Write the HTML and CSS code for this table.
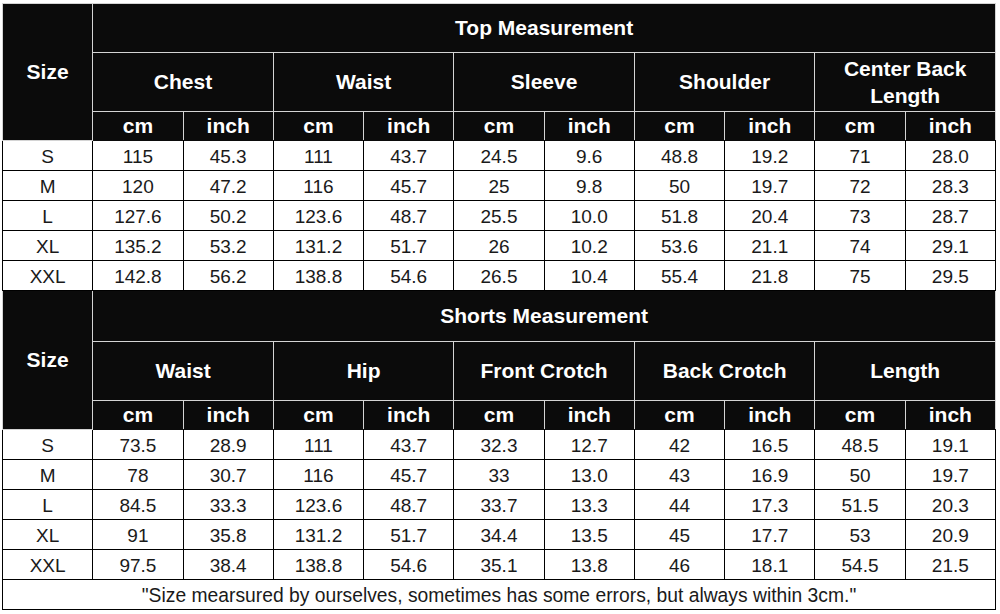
FILE: index.html
```html
<!DOCTYPE html>
<html>
<head>
<meta charset="utf-8">
<link rel="stylesheet" href="styles.css">
</head>
<body>
<table class="chart">
  <colgroup>
    <col><col><col><col><col><col><col><col><col><col><col>
  </colgroup>
  <tr class="r-title">
    <th class="h size" rowspan="3">Size</th>
    <th class="h" colspan="10">Top Measurement</th>
  </tr>
  <tr class="r-group">
    <th class="h" colspan="2">Chest</th>
    <th class="h" colspan="2">Waist</th>
    <th class="h" colspan="2">Sleeve</th>
    <th class="h" colspan="2">Shoulder</th>
    <th class="h two" colspan="2">Center Back<br>Length</th>
  </tr>
  <tr class="r-unit">
    <th class="h">cm</th><th class="h">inch</th>
    <th class="h">cm</th><th class="h">inch</th>
    <th class="h">cm</th><th class="h">inch</th>
    <th class="h">cm</th><th class="h">inch</th>
    <th class="h">cm</th><th class="h">inch</th>
  </tr>
  <tr class="r-data"><td>S</td><td>115</td><td>45.3</td><td>111</td><td>43.7</td><td>24.5</td><td>9.6</td><td>48.8</td><td>19.2</td><td>71</td><td>28.0</td></tr>
  <tr class="r-data"><td>M</td><td>120</td><td>47.2</td><td>116</td><td>45.7</td><td>25</td><td>9.8</td><td>50</td><td>19.7</td><td>72</td><td>28.3</td></tr>
  <tr class="r-data"><td>L</td><td>127.6</td><td>50.2</td><td>123.6</td><td>48.7</td><td>25.5</td><td>10.0</td><td>51.8</td><td>20.4</td><td>73</td><td>28.7</td></tr>
  <tr class="r-data"><td>XL</td><td>135.2</td><td>53.2</td><td>131.2</td><td>51.7</td><td>26</td><td>10.2</td><td>53.6</td><td>21.1</td><td>74</td><td>29.1</td></tr>
  <tr class="r-data"><td>XXL</td><td>142.8</td><td>56.2</td><td>138.8</td><td>54.6</td><td>26.5</td><td>10.4</td><td>55.4</td><td>21.8</td><td>75</td><td>29.5</td></tr>

  <tr class="r-title2">
    <th class="h size" rowspan="3">Size</th>
    <th class="h" colspan="10">Shorts Measurement</th>
  </tr>
  <tr class="r-group">
    <th class="h" colspan="2">Waist</th>
    <th class="h" colspan="2">Hip</th>
    <th class="h" colspan="2">Front Crotch</th>
    <th class="h" colspan="2">Back Crotch</th>
    <th class="h" colspan="2">Length</th>
  </tr>
  <tr class="r-unit">
    <th class="h">cm</th><th class="h">inch</th>
    <th class="h">cm</th><th class="h">inch</th>
    <th class="h">cm</th><th class="h">inch</th>
    <th class="h">cm</th><th class="h">inch</th>
    <th class="h">cm</th><th class="h">inch</th>
  </tr>
  <tr class="r-data"><td>S</td><td>73.5</td><td>28.9</td><td>111</td><td>43.7</td><td>32.3</td><td>12.7</td><td>42</td><td>16.5</td><td>48.5</td><td>19.1</td></tr>
  <tr class="r-data"><td>M</td><td>78</td><td>30.7</td><td>116</td><td>45.7</td><td>33</td><td>13.0</td><td>43</td><td>16.9</td><td>50</td><td>19.7</td></tr>
  <tr class="r-data"><td>L</td><td>84.5</td><td>33.3</td><td>123.6</td><td>48.7</td><td>33.7</td><td>13.3</td><td>44</td><td>17.3</td><td>51.5</td><td>20.3</td></tr>
  <tr class="r-data"><td>XL</td><td>91</td><td>35.8</td><td>131.2</td><td>51.7</td><td>34.4</td><td>13.5</td><td>45</td><td>17.7</td><td>53</td><td>20.9</td></tr>
  <tr class="r-data"><td>XXL</td><td>97.5</td><td>38.4</td><td>138.8</td><td>54.6</td><td>35.1</td><td>13.8</td><td>46</td><td>18.1</td><td>54.5</td><td>21.5</td></tr>
  <tr class="r-note"><td colspan="11">"Size mearsured by ourselves, sometimes has some errors, but always within 3cm."</td></tr>
</table>
</body>
</html>
```
FILE: styles.css
```css
html, body {
  margin: 0;
  padding: 0;
  background: #ffffff;
}
body {
  padding: 3px 0 0 2px;
  font-family: "Liberation Sans", Arial, sans-serif;
}
.chart {
  border-collapse: collapse;
  table-layout: fixed;
  width: 994px;
}
.chart th,
.chart td {
  padding: 0;
  text-align: center;
  vertical-align: middle;
}
.h {
  background: #0b0b0b;
  color: #ffffff;
  font-weight: bold;
  font-size: 21px;
  border: 1px solid #d4d4d4;
}
.two {
  line-height: 27px;
}
.chart td {
  border: 1px solid #000000;
  color: #1a1a1a;
  font-size: 19px;
  padding-top: 2px;
}
.r-title { height: 49px; }
.r-title2 { height: 51px; }
.r-group { height: 59px; }
.r-unit { height: 29px; }
.r-unit .h { border-bottom-color: #0b0b0b; }
.r-data { height: 30px; }
.r-data td { line-height: 20px; }
.r-note { height: 30px; }
.r-note td { font-size: 19.3px; }
```
